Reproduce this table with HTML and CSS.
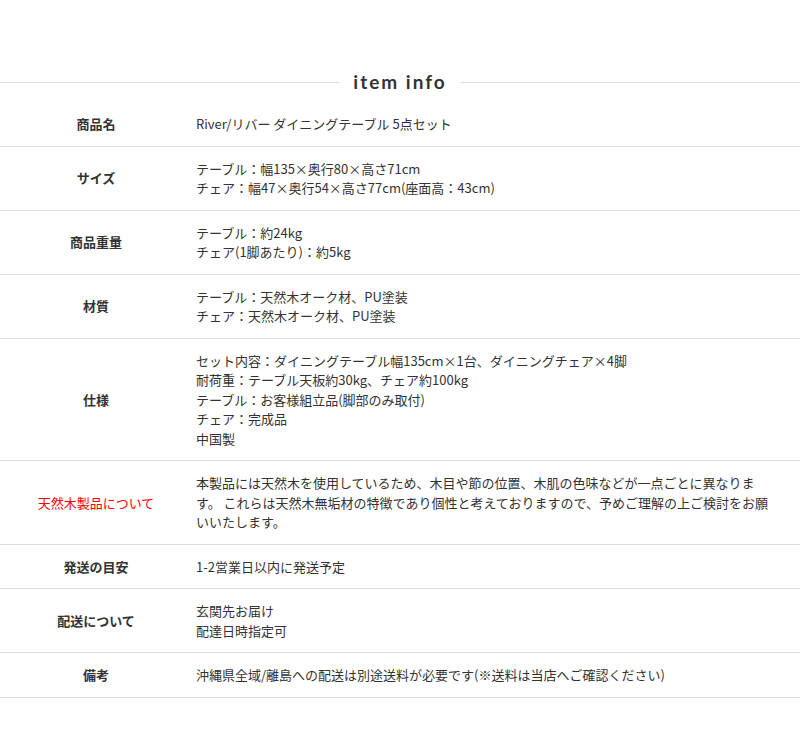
FILE: index.html
```html
<!DOCTYPE html>
<html lang="ja">
<head>
    <meta charset="UTF-8">
    <meta name="viewport" content="width=device-width, initial-scale=1.0">
    <title>item info</title>
    <link rel="stylesheet" href="styles.css">
</head>
<body>
    <div class="item-info">
        <h2 class="item-title">item info</h2>
        <div class="spec-table">
            <div class="spec-row">
                <div class="spec-label">商品名</div>
                <div class="spec-value">River/リバー ダイニングテーブル 5点セット</div>
            </div>
            <div class="spec-row">
                <div class="spec-label">サイズ</div>
                <div class="spec-value">テーブル：幅135×奥行80×高さ71cm<br>チェア：幅47×奥行54×高さ77cm(座面高：43cm)</div>
            </div>
            <div class="spec-row">
                <div class="spec-label">商品重量</div>
                <div class="spec-value">テーブル：約24kg<br>チェア(1脚あたり)：約5kg</div>
            </div>
            <div class="spec-row">
                <div class="spec-label">材質</div>
                <div class="spec-value">テーブル：天然木オーク材、PU塗装<br>チェア：天然木オーク材、PU塗装</div>
            </div>
            <div class="spec-row">
                <div class="spec-label">仕様</div>
                <div class="spec-value">セット内容：ダイニングテーブル幅135cm×1台、ダイニングチェア×4脚<br>耐荷重：テーブル天板約30kg、チェア約100kg<br>テーブル：お客様組立品(脚部のみ取付)<br>チェア：完成品<br>中国製</div>
            </div>
            <div class="spec-row">
                <div class="spec-label notice">天然木製品について</div>
                <div class="spec-value">本製品には天然木を使用しているため、木目や節の位置、木肌の色味などが一点ごとに異なります。 これらは天然木無垢材の特徴であり個性と考えておりますので、予めご理解の上ご検討をお願いいたします。</div>
            </div>
            <div class="spec-row">
                <div class="spec-label">発送の目安</div>
                <div class="spec-value">1-2営業日以内に発送予定</div>
            </div>
            <div class="spec-row">
                <div class="spec-label">配送について</div>
                <div class="spec-value">玄関先お届け<br>配達日時指定可</div>
            </div>
            <div class="spec-row">
                <div class="spec-label">備考</div>
                <div class="spec-value">沖縄県全域/離島への配送は別途送料が必要です(※送料は当店へご確認ください)</div>
            </div>
        </div>
    </div>
</body>
</html>
```

FILE: styles.css
```css
body {
    margin: 0;
    padding: 70px 0 0;
    background: #fff;
    font-family: "Noto Sans CJK JP", "Noto Sans", sans-serif;
    color: #333;
}
.item-info {
    width: 800px;
}
.item-title {
    display: flex;
    align-items: center;
    gap: 13px;
    margin: 0 0 8px;
    font-family: Lato, "Noto Sans", sans-serif;
    font-size: 19px;
    font-weight: 700;
    letter-spacing: 2px;
    line-height: 24px;
    color: #333;
}
.item-title::before,
.item-title::after {
    content: "";
    flex: 1;
    height: 1px;
    background: #ddd;
}
.spec-row {
    display: grid;
    grid-template-columns: 192px 1fr;
    align-items: center;
    padding: 12px 0;
    border-bottom: 1px solid #ddd;
    font-size: 13px;
    line-height: 1.5;
}
.spec-label {
    text-align: center;
    font-weight: 700;
}
.spec-label.notice {
    color: #f00;
    font-weight: 400;
}
.spec-value {
    padding: 0 27px 0 4px;
}
```
